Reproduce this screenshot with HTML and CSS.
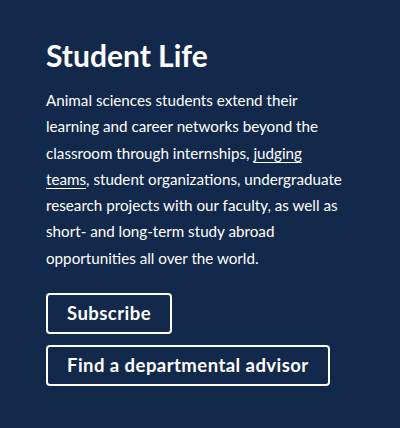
FILE: index.html
```html
<!DOCTYPE html>
<html lang="en">
<head>
<meta charset="utf-8">
<link rel="stylesheet" href="styles.css">
</head>
<body>
<section class="panel">
  <h2 class="title">Student Life</h2>
  <p class="text">Animal sciences students extend their<br>learning and career networks beyond the<br>classroom through internships, <a href="#" class="link">judging<br>teams</a>, student organizations, undergraduate<br>research projects with our faculty, as well as<br>short- and long-term study abroad<br>opportunities all over the world.</p>
  <div class="actions">
    <a href="#" class="btn">Subscribe</a>
    <a href="#" class="btn">Find a departmental advisor</a>
  </div>
</section>
</body>
</html>
```
FILE: styles.css
```css
html, body {
  margin: 0;
  padding: 0;
  background: #13294b;
}
.panel {
  box-sizing: border-box;
  width: 400px;
  height: 428px;
  padding: 36px 20px 0 46px;
  background: #13294b;
  color: #ffffff;
  font-family: Lato, "Noto Sans", sans-serif;
}
.title {
  margin: 0 0 13px 0;
  font-size: 30px;
  line-height: 38px;
  font-weight: 700;
}
.text {
  margin: 0 0 22px 0;
  font-size: 15.2px;
  line-height: 26.3px;
  white-space: nowrap;
}
.link {
  color: #ffffff;
  text-decoration: underline;
  text-underline-offset: 3px;
}
.actions {
  display: flex;
  flex-direction: column;
  align-items: flex-start;
  gap: 11px;
}
.btn {
  display: inline-block;
  box-sizing: border-box;
  height: 41px;
  line-height: 37px;
  padding: 0 19px;
  border: 2px solid #ffffff;
  border-radius: 4px;
  color: #ffffff;
  text-decoration: none;
  font-weight: 700;
  font-size: 18.5px;
  letter-spacing: 0.45px;
}
```
